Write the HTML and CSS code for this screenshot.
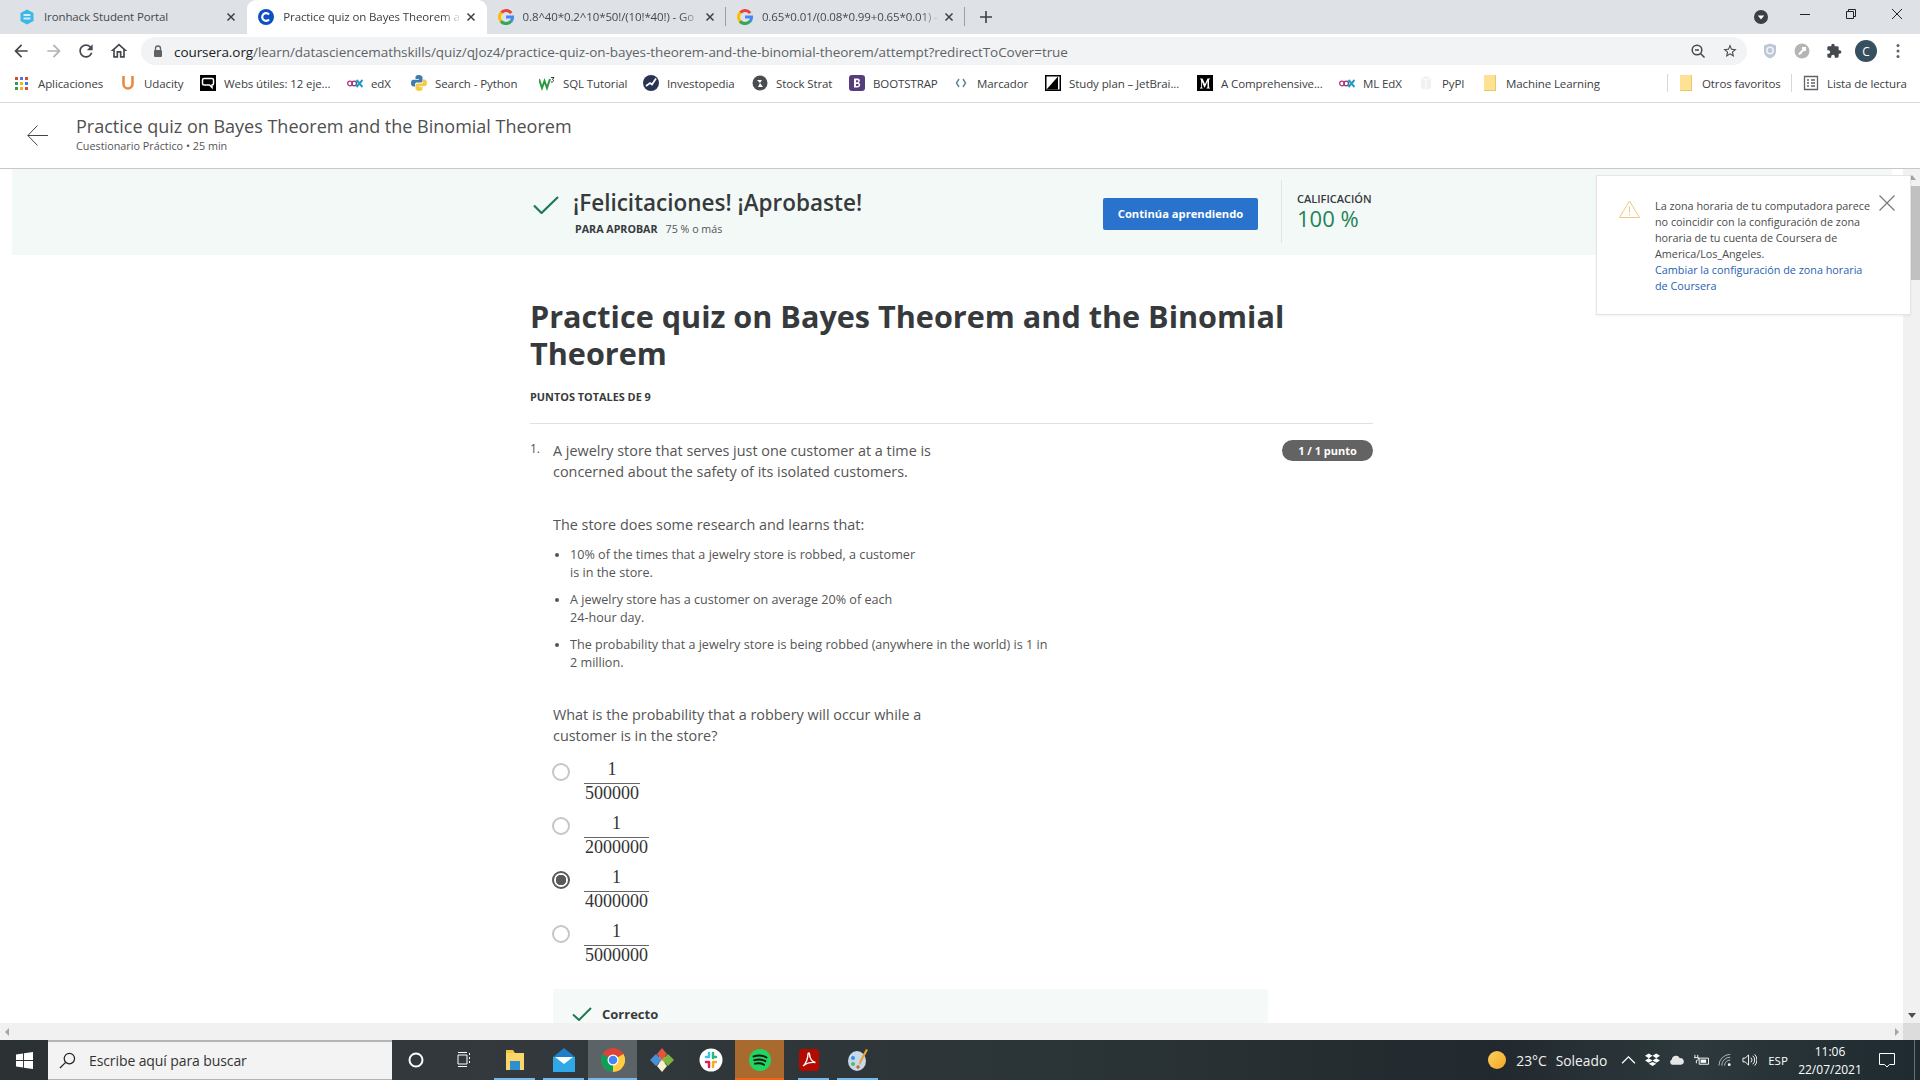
FILE: index.html
```html
<!DOCTYPE html>
<html lang="es">
<head>
<meta charset="utf-8">
<title>Practice quiz on Bayes Theorem and the Binomial Theorem</title>
<link rel="stylesheet" href="styles.css">
</head>
<body>
<div class="window">

  <div class="tabstrip">
    <div class="tab">
      <svg class="favicon" viewBox="0 0 16 16"><path d="M8 .5 14.5 4v8L8 15.5 1.5 12V4z" fill="#3fb6e8"/><rect x="4.5" y="5" width="7" height="2" fill="#cdeefb"/><rect x="4.5" y="8.5" width="7" height="2" fill="#cdeefb"/></svg>
      <span class="tab-title tab-plain">Ironhack Student Portal</span>
      <svg class="tab-close" viewBox="0 0 10 10"><path d="M1.5 1.5l7 7M8.5 1.5l-7 7"/></svg>
    </div>
    <div class="tab tab-active">
      <svg class="favicon" viewBox="0 0 16 16"><circle cx="8" cy="8" r="8" fill="#0f4fc4"/><path d="M11 5.4A3.9 3.9 0 1 0 11 10.6" fill="none" stroke="#fff" stroke-width="2.2"/></svg>
      <span class="tab-title">Practice quiz on Bayes Theorem a</span>
      <svg class="tab-close" viewBox="0 0 10 10"><path d="M1.5 1.5l7 7M8.5 1.5l-7 7"/></svg>
    </div>
    <div class="tab">
      <svg class="favicon" viewBox="0 0 16 16"><use href="#google"/></svg>
      <span class="tab-title">0.8^40*0.2^10*50!/(10!*40!) - Go</span>
      <svg class="tab-close" viewBox="0 0 10 10"><path d="M1.5 1.5l7 7M8.5 1.5l-7 7"/></svg>
    </div>
    <i class="tab-sep"></i>
    <div class="tab">
      <svg class="favicon" viewBox="0 0 16 16"><use href="#google"/></svg>
      <span class="tab-title">0.65*0.01/(0.08*0.99+0.65*0.01) -</span>
      <svg class="tab-close" viewBox="0 0 10 10"><path d="M1.5 1.5l7 7M8.5 1.5l-7 7"/></svg>
    </div>
    <i class="tab-sep"></i>
    <svg class="new-tab" viewBox="0 0 12 12"><path d="M6 0v12M0 6h12"/></svg>
    <div class="win-controls">
      <span class="profile-down"><svg viewBox="0 0 14 14"><circle cx="7" cy="7" r="7" fill="#3c4043"/><path d="M3.8 5.5h6.4L7 9.6z" fill="#fff"/></svg></span>
      <span class="win-btn"><svg viewBox="0 0 12 12"><path d="M1 6.5h10"/></svg></span>
      <span class="win-btn"><svg viewBox="0 0 12 12"><path d="M1.5 3.5h7v7h-7zM3.5 3.5v-2h7v7h-2"/></svg></span>
      <span class="win-btn"><svg viewBox="0 0 12 12"><path d="M1 1l10 10M11 1L1 11"/></svg></span>
    </div>
  </div>

  <div class="toolbar">
    <span class="nav-btn"><svg viewBox="0 0 24 24"><path d="M20 11H7.830l5.590-5.590L12 4l-8 8 8 8 1.410-1.410L7.830 13H20v-2z" fill="#45494d"/></svg></span>
    <span class="nav-btn"><svg viewBox="0 0 24 24"><path d="M4 11h12.170l-5.590-5.590L12 4l8 8-8 8-1.410-1.410L16.170 13H4v-2z" fill="#b0b3b7"/></svg></span>
    <span class="nav-btn"><svg viewBox="0 0 24 24"><path d="M17.650 6.350C16.200 4.900 14.210 4 12 4c-4.420 0-7.990 3.580-7.990 8s3.570 8 7.990 8c3.730 0 6.840-2.550 7.730-6h-2.080c-.82 2.330-3.040 4-5.650 4-3.310 0-6-2.690-6-6s2.690-6 6-6c1.660 0 3.140.69 4.220 1.780L13 11h7V4l-2.350 2.350z" fill="#45494d"/></svg></span>
    <span class="nav-btn"><svg viewBox="0 0 24 24"><path d="M12 5.690l5 4.500V18h-2v-6H9v6H7v-7.810l5-4.500M12 3L2 12h3v8h6v-6h2v6h6v-8h3L12 3z" fill="#45494d"/></svg></span>
    <div class="omnibox">
      <svg class="lock" viewBox="0 0 10 12"><path d="M2.500 5V3.500a2.500 2.500 0 0 1 5 0V5" fill="none" stroke="#5f6368" stroke-width="1.300"/><rect x="1" y="5" width="8" height="7" rx="1" fill="#5f6368"/></svg>
      <span class="url">coursera.org<span class="url-path">/learn/datasciencemathskills/quiz/qJoz4/practice-quiz-on-bayes-theorem-and-the-binomial-theorem/attempt?redirectToCover=true</span></span>
      <svg class="omni-ic" viewBox="0 0 16 16"><circle cx="7" cy="7" r="4.800" class="ic-dark"/><path d="M10.500 10.500l4 4M5 7h4" class="ic-dark"/></svg>
      <svg class="omni-ic" viewBox="0 0 24 24"><path d="M22 9.240l-7.190-.62L12 2 9.190 8.630 2 9.240l5.460 4.730L5.820 21 12 17.270 18.180 21l-1.630-7.030L22 9.240zM12 15.400l-3.760 2.270 1-4.280-3.320-2.880 4.380-.38L12 6.100l1.710 4.040 4.380.38-3.320 2.880 1 4.280L12 15.400z" fill="#45494d"/></svg>
    </div>
    <div class="ext-row">
      <span class="ext"><svg viewBox="0 0 16 16"><path d="M8 .5l6 2v6c0 3.500-3 6-6 7-3-1-6-3.500-6-7v-6z" fill="#bcc6d4"/><circle cx="8" cy="7.500" r="3.200" fill="none" stroke="#f1f3f6" stroke-width="1.500"/></svg></span>
      <span class="ext"><svg viewBox="0 0 16 16"><circle cx="8" cy="8" r="7.500" fill="#b5b5b5"/><path d="M5 11.500 11 5M8 5h3v3" fill="none" stroke="#fff" stroke-width="2"/></svg></span>
      <span class="ext"><svg viewBox="0 0 24 24"><path d="M20.500 11H19V7c0-1.100-.9-2-2-2h-4V3.500C13 2.120 11.880 1 10.500 1S8 2.120 8 3.500V5H4c-1.100 0-1.990.9-1.990 2v3.800H3.500c1.490 0 2.700 1.210 2.700 2.700s-1.210 2.700-2.700 2.700H2V20c0 1.100.9 2 2 2h3.800v-1.500c0-1.490 1.210-2.700 2.700-2.700 1.490 0 2.700 1.210 2.700 2.700V22H17c1.100 0 2-.9 2-2v-4h1.500c1.380 0 2.500-1.120 2.500-2.500S21.880 11 20.500 11z" fill="#45494d"/></svg></span>
      <span class="avatar">C</span>
      <span class="ext"><svg viewBox="0 0 4 16"><circle cx="2" cy="2.500" r="1.500" fill="#5f6368"/><circle cx="2" cy="8" r="1.500" fill="#5f6368"/><circle cx="2" cy="13.500" r="1.500" fill="#5f6368"/></svg></span>
    </div>
  </div>

  <div class="bookmarks">
    <a class="bm"><svg class="bm-apps" viewBox="0 0 13 13"><rect width="3" height="3" fill="#d84b37"/><rect x="5" width="3" height="3" fill="#3c7fe0"/><rect x="10" width="3" height="3" fill="#d84b37"/><rect y="5" width="3" height="3" fill="#3a9a4d"/><rect x="5" y="5" width="3" height="3" fill="#f1b51c"/><rect x="10" y="5" width="3" height="3" fill="#3c7fe0"/><rect y="10" width="3" height="3" fill="#3a9a4d"/><rect x="5" y="10" width="3" height="3" fill="#f1b51c"/><rect x="10" y="10" width="3" height="3" fill="#d84b37"/></svg><span>Aplicaciones</span></a>
    <a class="bm"><svg viewBox="0 0 16 16"><path d="M3.500 1v8a4.500 4.500 0 0 0 9 0V1" fill="none" stroke="#e58a45" stroke-width="2.600"/></svg><span>Udacity</span></a>
    <a class="bm"><svg viewBox="0 0 16 16"><rect width="16" height="16" fill="#000"/><path d="M4 3.500h8a1.500 1.500 0 0 1 1.500 1.500v3.500A1.500 1.500 0 0 1 12 10v2.500L9.500 10H4a1.500 1.500 0 0 1-1.500-1.500V5A1.500 1.500 0 0 1 4 3.500z" fill="none" stroke="#fff" stroke-width="1.500"/></svg><span>Webs útiles: 12 eje...</span></a>
    <a class="bm"><svg viewBox="0 0 16 16"><circle cx="3" cy="8.500" r="2.300" fill="none" stroke="#b5396f" stroke-width="1.300"/><circle cx="7.200" cy="8.500" r="2.300" fill="none" stroke="#8a3d7a" stroke-width="1.300"/><path d="M9.500 5l6 7M15.500 5l-6 7" stroke="#1f9bc4" stroke-width="2"/></svg><span>edX</span></a>
    <a class="bm"><svg viewBox="0 0 16 16"><path d="M8 0C5 0 4.500 1.200 4.500 2.500V4H8v.8H2.500C1 4.800 0 6 0 8s1 3.500 2.500 3.500H4V9.500C4 8 5 7.500 6 7.500h4c1 0 1.500-.8 1.500-1.500V2.500C11.500 1 10 0 8 0z" fill="#3f7cb0"/><path d="M8 16c3 0 3.500-1.200 3.500-2.500V12H8v-.8h5.500C15 11.200 16 10 16 8s-1-3.500-2.500-3.500H12v2C12 8 11 8.500 10 8.500H6c-1 0-1.500.8-1.500 1.500v3.500C4.500 15 6 16 8 16z" fill="#f4cc45"/></svg><span>Search - Python</span></a>
    <a class="bm"><svg viewBox="0 0 16 16"><path d="M0 4l3 9 2.500-7 2.500 7 3-9" fill="none" stroke="#2a9a3e" stroke-width="2"/><path d="M12 2.500h3l-1.500 2c1.500 0 1.500 3-1.500 2.500" fill="none" stroke="#333" stroke-width="1"/></svg><span>SQL Tutorial</span></a>
    <a class="bm"><svg viewBox="0 0 16 16"><circle cx="8" cy="8" r="8" fill="#2a3353"/><path d="M3 11l4-3 2 1.500 4-6" fill="none" stroke="#fff" stroke-width="1.700"/></svg><span>Investopedia</span></a>
    <a class="bm"><svg viewBox="0 0 16 16"><circle cx="8" cy="8" r="7.500" fill="#4a4d50"/><path d="M5 5h5l-2 3 3 4H6l2-4z" fill="#fff"/></svg><span>Stock Strat</span></a>
    <a class="bm"><svg viewBox="0 0 16 16"><rect width="16" height="16" rx="3" fill="#563d7c"/><path d="M5 3.500h3.500c3 0 3 3.500 1 4.300 2.700.7 2.200 4.700-1 4.700H5zM7 5.200v2h1.300c1.500 0 1.500-2 0-2zM7 8.900v2h1.500c1.700 0 1.700-2 0-2z" fill="#fff" fill-rule="evenodd"/></svg><span>BOOTSTRAP</span></a>
    <a class="bm"><svg viewBox="0 0 16 16"><path d="M6 4 3.500 8 6 12M10 4l2.500 4L10 12" fill="none" stroke="#5f8a94" stroke-width="1.500"/></svg><span>Marcador</span></a>
    <a class="bm"><svg viewBox="0 0 16 16"><rect width="16" height="16" fill="#000"/><rect x="1.500" y="1.500" width="13" height="13" fill="#fff"/><path d="M1.500 14.500 13 1.500v13z" fill="#000"/></svg><span>Study plan – JetBrai...</span></a>
    <a class="bm"><svg viewBox="0 0 16 16"><rect width="16" height="16" fill="#000"/><path d="M3 3.500h2.500L8 9l2.500-5.500H13v.5l-1 .8v7.400l1 .8v.5H9.500V13l1-.8V6.500L7.800 12.500h-.5L4.800 6.500v5.700l1 .8v.5H3V13l1-.8V4.800L3 4z" fill="#fff"/></svg><span>A Comprehensive...</span></a>
    <a class="bm"><svg viewBox="0 0 16 16"><circle cx="3" cy="8.500" r="2.300" fill="none" stroke="#b5396f" stroke-width="1.300"/><circle cx="7.200" cy="8.500" r="2.300" fill="none" stroke="#8a3d7a" stroke-width="1.300"/><path d="M9.500 5l6 7M15.500 5l-6 7" stroke="#1f9bc4" stroke-width="2"/></svg><span>ML EdX</span></a>
    <a class="bm"><svg viewBox="0 0 16 16"><path d="M3 3l5-2 5 2v10l-5 2-5-2z" fill="#f1f1ee"/><path d="M8 5v10M3 3l5 2 5-2" fill="none" stroke="#fff"/></svg><span>PyPI</span></a>
    <a class="bm"><svg class="bm-folder" viewBox="0 0 12 16"><path d="M0 0h12v16H0z" fill="#fde293"/><path d="M0 15h12v1H0zM11 0h1v16h-1z" fill="#e8c869"/></svg><span>Machine Learning</span></a>
    <i class="bm-sep"></i>
    <a class="bm"><svg class="bm-folder" viewBox="0 0 12 16"><path d="M0 0h12v16H0z" fill="#fde293"/><path d="M0 15h12v1H0zM11 0h1v16h-1z" fill="#e8c869"/></svg><span>Otros favoritos</span></a>
    <i class="bm-sep"></i>
    <a class="bm"><svg viewBox="0 0 16 16"><path d="M1.500 1.500h13v13h-13zM4 5h2M8 5h4M4 8h2M8 8h4M4 11h2M8 11h4" fill="none" stroke="#5f6368" stroke-width="1.300"/></svg><span>Lista de lectura</span></a>
  </div>

  <header class="course-header">
    <svg class="back-arrow" viewBox="0 0 21 21"><path d="M21 10.500H1M10.500 .5 .8 10.500l9.700 10" fill="none" stroke="#444" stroke-width="1"/></svg>
    <div class="course-heading">
      <div class="course-title">Practice quiz on Bayes Theorem and the Binomial Theorem</div>
      <div class="course-sub">Cuestionario Práctico • 25 min</div>
    </div>
  </header>

  <div class="scroll-row">
    <main class="page">
      <section class="banner">
        <div class="banner-inner">
          <svg class="banner-check" viewBox="0 0 26 18"><path d="M1 9.500 8.500 17 25 1" fill="none" stroke="#1f7a54" stroke-width="2.200"/></svg>
          <div class="banner-text">
            <div class="banner-title">¡Felicitaciones! ¡Aprobaste!</div>
            <div class="banner-sub"><b>PARA APROBAR</b><span>75 % o más</span></div>
          </div>
          <button class="continue">Continúa aprendiendo</button>
          <i class="banner-sep"></i>
          <div class="grade">
            <div class="grade-label">CALIFICACIÓN</div>
            <div class="grade-value">100 %</div>
          </div>
        </div>
      </section>

      <article class="quiz">
        <h1>Practice quiz on Bayes Theorem and the Binomial Theorem</h1>
        <div class="points-total">PUNTOS TOTALES DE 9</div>
        <div class="question">
          <div class="q-num">1.</div>
          <div class="q-body">
            <p>A jewelry store that serves just one customer at a time is<br>concerned about the safety of its isolated customers.</p>
            <p class="q-gap">The store does some research and learns that:</p>
            <ul>
              <li>10% of the times that a jewelry store is robbed, a customer<br>is in the store.</li>
              <li>A jewelry store has a customer on average 20% of each<br>24-hour day.</li>
              <li>The probability that a jewelry store is being robbed (anywhere in the world) is 1 in<br>2 million.</li>
            </ul>
            <p class="q-gap">What is the probability that a robbery will occur while a<br>customer is in the store?</p>
            <div class="options">
              <div class="option"><i class="radio"></i><div class="frac"><span class="num">1</span><span class="den">500000</span></div></div>
              <div class="option"><i class="radio"></i><div class="frac"><span class="num">1</span><span class="den">2000000</span></div></div>
              <div class="option"><i class="radio radio-on"></i><div class="frac"><span class="num">1</span><span class="den">4000000</span></div></div>
              <div class="option"><i class="radio"></i><div class="frac"><span class="num">1</span><span class="den">5000000</span></div></div>
            </div>
            <div class="feedback">
              <svg viewBox="0 0 20 14"><path d="M1 7.500 7 13 19 1" fill="none" stroke="#1f7a54" stroke-width="2"/></svg>
              <span>Correcto</span>
            </div>
          </div>
          <div class="pill">1 / 1 punto</div>
        </div>
      </article>
    </main>

    <div class="vscroll">
      <i class="arrow-up"></i>
      <i class="v-thumb"></i>
      <i class="arrow-down"></i>
    </div>

    <aside class="notice">
      <svg class="notice-warn" viewBox="0 0 21 18"><path d="M10.500 1 20.500 17.500H.5z" fill="none" stroke="#f3c57f" stroke-width="1"/><path d="M10.500 6.500v6M10.500 14v1.500" stroke="#f3c57f" stroke-width="1"/></svg>
      <div class="notice-text">La zona horaria de tu computadora parece no coincidir con la configuración de zona horaria de tu cuenta de Coursera de America/Los_Angeles.<br><a>Cambiar la configuración de zona horaria de Coursera</a></div>
      <svg class="notice-close" viewBox="0 0 16 16"><path d="M.5.5l15 15M15.500.5l-15 15" stroke="#777" stroke-width="1.200"/></svg>
    </aside>
  </div>

  <div class="hscroll">
    <i class="arrow-left"></i>
    <i class="arrow-right"></i>
    <i class="corner"></i>
  </div>

  <footer class="taskbar">
    <div class="start"><svg viewBox="0 0 18 18"><path d="M0 2.600 7.500 1.500v7H0zM8.500 1.400 18 0v8.500H8.500zM0 9.500h7.500v7L0 15.400zM8.500 9.500H18V18L8.500 16.600z" fill="#fff"/></svg></div>
    <div class="search"><svg viewBox="0 0 18 18"><circle cx="11" cy="7" r="5.500" fill="none" stroke="#222" stroke-width="1.300"/><path d="M7 11 1 17" stroke="#222" stroke-width="1.300"/></svg><span>Escribe aquí para buscar</span></div>
    <div class="tb-cell tb-wide"><svg viewBox="0 0 16 16"><circle cx="8" cy="8" r="6.500" fill="none" stroke="#fff" stroke-width="2"/></svg></div>
    <div class="tb-cell tb-wide tb-gap"><svg viewBox="0 0 16 16"><path d="M1 3h9v9H1zM1 .5h9M1 14.500h9M12.500 1v2M12.500 5v2M12.500 9v2" fill="none" stroke="#fff"/></svg></div>
    <div class="tb-cell run"><svg class="tb-icon" viewBox="0 0 24 24"><path d="M3 2h7l2 3h9v8H3z" fill="#f6c445"/><path d="M3 5h18v17H3z" fill="#fbd66b"/><path d="M7 13h10v9H7z" fill="#2f8fcf"/></svg></div>
    <div class="tb-cell run"><svg class="tb-icon" viewBox="0 0 24 24"><path d="M12 0 23 9v15H1V9z" fill="#1d7fc7"/><path d="M1 9h22v15H1z" fill="#30a7e6"/><path d="M3 9h18l-9 7z" fill="#fff"/></svg></div>
    <div class="tb-cell run tb-active"><svg class="tb-icon" viewBox="0 0 24 24"><circle cx="12" cy="12" r="12" fill="#db4437"/><path d="M12 12 1.600 6A12 12 0 0 0 12 24z" fill="#0f9d58"/><path d="M12 12v12A12 12 0 0 0 22.400 6z" fill="#ffcd40"/><circle cx="12" cy="12" r="5.500" fill="#fff"/><circle cx="12" cy="12" r="4.300" fill="#4285f4"/></svg></div>
    <div class="tb-cell"><svg class="tb-icon" viewBox="0 0 24 24"><path d="M12 6l6 6-6 6-6-6z" fill="#f0c04a"/><path d="M6 6l6 6-6 6-6-6z" fill="#4a90d9"/><path d="M18 6l6 6-6 6-6-6z" fill="#7cb342"/><path d="M12 0l5 6-5 6-5-6z" fill="#e0553f"/><path d="M12 12l5 6-5 6-5-6z" fill="#f7f1d0"/></svg></div>
    <div class="tb-cell"><svg class="tb-icon" viewBox="0 0 24 24"><circle cx="12" cy="12" r="11.500" fill="#fff"/><path d="M10 5v4M7 9h3" stroke="#36c5f0" stroke-width="2.500" stroke-linecap="round"/><path d="M14 5v5M14 9h3" stroke="#2eb67d" stroke-width="2.500" stroke-linecap="round"/><path d="M10 14v5M7 14h3" stroke="#e01e5a" stroke-width="2.500" stroke-linecap="round"/><path d="M14 14h3M14 14v5" stroke="#ecb22e" stroke-width="2.500" stroke-linecap="round"/></svg></div>
    <div class="tb-cell run tb-orange"><svg class="tb-icon" viewBox="0 0 24 24"><circle cx="12" cy="12" r="11" fill="#1ed760"/><path d="M5.500 8.500c4-1.300 9.500-1 13 1M6.300 12.200c3.500-1 8-.7 11 1M7 15.700c3-.8 6.500-.5 9 1" fill="none" stroke="#191414" stroke-width="1.900" stroke-linecap="round"/></svg></div>
    <div class="tb-cell run run-short"><svg class="tb-icon" viewBox="0 0 24 24"><rect x="2" y="1" width="20" height="22" rx="3" fill="#b30b00"/><path d="M6 18c3-2 5-8 5-12 0-1.500 1.500-1.500 1.500 0 0 5 3 8 6 8.500-4-.5-9 .5-12.500 3.500z" fill="none" stroke="#fff" stroke-width="1.400"/></svg></div>
    <div class="tb-cell run"><svg class="tb-icon" viewBox="0 0 24 24"><ellipse cx="11" cy="13" rx="9" ry="10" fill="#c6d9ea"/><circle cx="7" cy="10" r="2" fill="#3b8edb"/><circle cx="7" cy="16" r="2" fill="#5cb85c"/><circle cx="12" cy="19" r="1.700" fill="#e0553f"/><path d="M20 1l2 1-6 11-2 4-1-1 1-4z" fill="#e8a13a"/></svg></div>

    <div class="tray">
      <div class="weather"><i class="sun"></i><span>23°C</span><span>Soleado</span></div>
      <span class="tray-ic"><svg viewBox="0 0 14 8"><path d="M1 7l6-6 6 6" fill="none" stroke="#fff" stroke-width="1.200"/></svg></span>
      <span class="tray-ic"><svg viewBox="0 0 16 14"><path d="M4 0l4 2.500L4 5 0 2.500zM12 0l4 2.500L12 5 8 2.500zM4 5l4 2.500L4 10 0 7.500zM12 5l4 2.500L12 10 8 7.500zM4 11l4-2 4 2-4 2.500z" fill="#fff"/></svg></span>
      <span class="tray-ic"><svg viewBox="0 0 16 10"><path d="M3 10a3 3 0 0 1 0-5.500A4.500 4.500 0 0 1 11.500 3 3.500 3.500 0 0 1 13 10z" fill="#e6e6e6"/></svg></span>
      <span class="tray-ic"><svg viewBox="0 0 16 12"><path d="M5.500 4h10v6.500h-10zM1 .5v3M4 .5v3M0 3.500h5c0 3-2 3-2.500 3v3" fill="none" stroke="#fff"/><path d="M7 5.500h6v3.500H7z" fill="#fff"/></svg></span>
      <span class="tray-ic"><svg viewBox="0 0 16 14"><path d="M1 13A12 12 0 0 1 13 1M4 13a9 9 0 0 1 9-9M7 13a6 6 0 0 1 6-6" fill="none" stroke="#bbb"/><circle cx="12" cy="12" r="1.500" fill="#fff"/></svg></span>
      <span class="tray-ic"><svg viewBox="0 0 16 14"><path d="M1 5h2.500L7 1.500v11L3.500 9H1zM9.500 4.500a3.500 3.500 0 0 1 0 5M11.500 2.500a6 6 0 0 1 0 9M13.500 1a8.500 8.500 0 0 1 0 12" fill="none" stroke="#fff"/></svg></span>
      <span class="lang">ESP</span>
      <div class="clock"><span>11:06</span><span>22/07/2021</span></div>
      <span class="notif"><svg viewBox="0 0 16 16"><path d="M.5 1.500h15v11h-5L8 15l-2.500-2.500h-5z" fill="none" stroke="#fff"/></svg></span>
      <i class="desk-edge"></i>
    </div>
  </footer>
</div>

<svg class="defs" width="0" height="0"><defs>
  <g id="google" fill="none" stroke-width="3">
    <path d="M13.200 4.200A6.500 6.500 0 0 0 3.200 3.700" stroke="#ea4335"/>
    <path d="M3.500 3.300A6.500 6.500 0 0 0 3.300 12.500" stroke="#fbbc05"/>
    <path d="M3 12.200A6.500 6.500 0 0 0 13 12.300" stroke="#34a853"/>
    <path d="M13 12.500A6.500 6.500 0 0 0 14.500 8H8" stroke="#4285f4"/>
  </g>
</defs></svg>
</body>
</html>
```
FILE: styles.css
```css
* { box-sizing: border-box; }
html, body { margin: 0; padding: 0; height: 100%; overflow: hidden; background: #fff; }
body { font-family: "Open Sans", "Noto Sans", sans-serif; color: #373a3c; }
.defs { position: absolute; }
.window { display: flex; flex-direction: column; width: 1920px; height: 1080px; overflow: hidden; }

/* tab strip */
.tabstrip { flex: 0 0 34px; display: flex; align-items: stretch; background: #dee1e6; padding-left: 8px; }
.tab { width: 239.3px; display: flex; align-items: center; padding: 0 9px 1px 11px; font-size: 11.5px; color: #45494d; letter-spacing: -.12px; }
.tab-active { background: #fff; border-radius: 9px 9px 0 0; color: #3c4043; }
.tab-sep { flex: 0 0 1px; margin: 7px 0 8px -1px; background: #9aa0a6; }
.favicon { width: 16px; height: 16px; flex: none; margin-right: 9px; }
.tab-title { flex: 1; white-space: nowrap; -webkit-mask-image: linear-gradient(90deg, #000 88%, transparent 99%); mask-image: linear-gradient(90deg, #000 88%, transparent 99%); }
.tab-plain { -webkit-mask-image: none; mask-image: none; }
.tab-close { width: 14px; height: 14px; flex: none; padding: 2px; fill: none; stroke: #3c4043; stroke-width: 1.500; }
.new-tab { width: 12px; height: 12px; margin: 11px 0 0 15px; fill: none; stroke: #3c4043; stroke-width: 1.600; }
.win-controls { margin-left: auto; display: flex; align-items: flex-start; }
.profile-down { width: 14px; height: 14px; margin: 10px 14px 0 0; display: block; }
.profile-down svg { display: block; width: 14px; height: 14px; }
.win-btn { width: 46px; height: 28px; display: flex; align-items: center; justify-content: center; }
.win-btn svg { width: 12px; height: 12px; fill: none; stroke: #222; stroke-width: 1; }

/* toolbar */
.toolbar { flex: 0 0 34px; display: flex; align-items: center; background: #fff; padding-left: 5px; }
.nav-btn { width: 32.5px; height: 28px; display: flex; align-items: center; justify-content: center; }
.nav-btn svg { width: 20px; height: 20px; }
.ic-dark { fill: none; stroke: #45494d; stroke-width: 1.500; }
.omnibox { width: 1606px; height: 28px; margin-left: 6px; padding: 0 9px 0 12px; border-radius: 14px; background: #f1f3f4; display: flex; align-items: center; }
.lock { width: 10px; height: 12px; flex: none; margin-right: 11px; }
.url { flex: 1; padding-top: 2px; font-size: 13.5px; color: #202124; white-space: nowrap; overflow: hidden; letter-spacing: -.07px; }
.url-path { color: #5f6368; }
.omni-ic { width: 16px; height: 16px; flex: none; margin-left: 16px; }
.ext-row { margin-left: 7px; display: flex; align-items: center; }
.ext { width: 32px; height: 24px; display: flex; align-items: center; justify-content: center; }
.ext svg { height: 16px; width: 16px; }
.avatar { width: 22px; height: 22px; margin: 0 5px; border-radius: 50%; background: #37505f; color: #fff; font-size: 12px; display: flex; align-items: center; justify-content: center; }

/* bookmarks */
.bookmarks { flex: 0 0 35px; border-bottom: 1px solid #d9d9d9; padding: 0 0 4px 15px; display: grid; align-items: center; grid-template-columns: 105px 80px 147px 64px 128px 104px 109px 97px 104px 92px 152px 142px 79px 64px 185px 11px 113px 12px 1fr; background: #fff; font-size: 11.5px; color: #3c4043; letter-spacing: -.1px; }
.bm { display: flex; align-items: center; gap: 8px; white-space: nowrap; }
.bm svg { width: 16px; height: 16px; flex: none; }
.bm .bm-apps { width: 13px; height: 13px; margin-right: 2px; }
.bm .bm-folder { width: 12px; margin: 0 2px; }
.bm-sep { width: 1px; height: 18px; background: #d8d8d8; }

/* course header */
.course-header { flex: 0 0 66px; border-bottom: 1px solid #c8c8c8; padding-left: 27px; display: flex; align-items: center; background: #fff; }
.back-arrow { width: 21px; height: 21px; margin-right: 28px; }
.course-heading { padding-bottom: 4px; }
.course-title { font-size: 18px; line-height: 24px; color: #4f4f4f; }
.course-sub { font-size: 10.8px; line-height: 14px; margin-top: 1px; color: #555; }

/* scroll area */
.scroll-row { flex: 1; min-height: 0; position: relative; display: flex; overflow: hidden; }
.page { flex: 1; min-width: 0; background: #fff; overflow: hidden; }
.vscroll { flex: 0 0 17px; background: #f1f1f1; display: flex; flex-direction: column; align-items: stretch; }
.arrow-up { height: 0; width: 0; margin: 6px auto 0; border: 4px solid transparent; border-top: 0; border-bottom: 5px solid #a3a3a3; }
.v-thumb { margin-top: 6px; height: 94px; background: #c1c1c1; }
.arrow-down { height: 0; width: 0; margin: auto auto 5px; border: 4px solid transparent; border-bottom: 0; border-top: 5px solid #505050; }
.hscroll { flex: 0 0 17px; background: #f1f1f1; display: flex; align-items: center; padding-left: 5px; }
.arrow-left { width: 0; height: 0; border: 4px solid transparent; border-left: 0; border-right: 4px solid #a3a3a3; }
.arrow-right { margin-left: auto; margin-right: 4px; width: 0; height: 0; border: 4px solid transparent; border-right: 0; border-left: 4px solid #a3a3a3; }
.corner { width: 17px; height: 17px; background: #dcdcdc; }

/* banner */
.banner { margin: 0 11px 0 12px; height: 86px; background: #f2f9f7; }
.banner-inner { width: 843px; margin-left: 518px; height: 86px; display: flex; align-items: flex-start; }
.banner-check { width: 26px; height: 18px; margin: 27px 14px 0 3px; flex: none; }
.banner-text { margin-top: 18px; }
.banner-title { font-size: 22.5px; line-height: 32px; font-weight: 600; color: #373a3c; white-space: nowrap; }
.banner-sub { margin: 2px 0 0 2px; font-size: 11px; line-height: 16px; color: #555; display: flex; gap: 8px; }
.banner-sub b { font-weight: 700; color: #373a3c; font-size: 10.7px; }
.banner-sub span { font-size: 10.7px; }
.continue { margin: 29px 0 0 auto; width: 155px; height: 32px; flex: none; border: 0; border-radius: 2px; background: #2a73cc; color: #fff; font: 700 11.2px "Open Sans", sans-serif; padding: 0 0 2px; }
.banner-sep { flex: none; width: 1px; height: 63px; margin: 11px 15px 0 23px; background: #e1e6e4; }
.grade { width: 76px; margin-top: 22px; flex: none; }
.grade-label { font-size: 11px; line-height: 16px; font-weight: 600; color: #373a3c; white-space: nowrap; }
.grade-value { font-size: 22px; line-height: 28px; margin-top: -3px; color: #1f8354; white-space: nowrap; }

/* quiz */
.quiz { width: 843px; margin-left: 530px; padding-top: 43px; }
h1 { margin: 0; font-size: 30.6px; line-height: 37px; font-weight: 700; color: #373a3c; }
.points-total { margin-top: 17px; font-size: 10.9px; line-height: 16px; font-weight: 700; color: #373a3c; padding-bottom: 18px; border-bottom: 1px solid #e1e1e1; }
.question { display: flex; align-items: flex-start; padding-top: 16px; }
.q-num { flex: 0 0 23px; font-size: 12px; line-height: 18px; color: #555; }
.q-body { flex: 1; min-width: 0; color: #555; }
.q-body p { margin: 0; font-size: 14.4px; line-height: 21px; }
.q-body .q-gap { margin-top: 32px; }
ul { margin: 10.500px 0 0; padding: 0 0 0 17px; font-size: 12.6px; line-height: 18px; color: #555; }
li { margin-bottom: 9px; }
li:last-child { margin-bottom: 0; }
.options { margin-top: 14px; display: flex; flex-direction: column; gap: 12px; }
.option { display: flex; align-items: flex-start; }
.radio { flex: none; width: 18px; height: 18px; margin: 3px 14px 0 -1px; border: 2px solid #c6c6c6; border-radius: 50%; display: block; }
.radio-on { border-color: #5a5a5a; background: radial-gradient(circle, #5a5a5a 0 5px, #fff 5.500px); }
.frac { display: inline-flex; flex-direction: column; align-items: stretch; text-align: center; font-family: "Liberation Serif", serif; font-size: 18px; line-height: 18px; color: #333; }
.num { padding-bottom: 5px; border-bottom: 1px solid #666; }
.den { padding: 0 1px; }
.feedback { margin-top: 25px; width: 715px; height: 120px; padding: 18px 0 0 19px; background: #f5f9f8; display: flex; align-items: flex-start; gap: 10px; }
.feedback svg { width: 20px; height: 14px; flex: none; }
.feedback span { font-size: 13px; line-height: 14px; font-weight: 700; color: #373a3c; }
.pill { flex: none; width: 91px; height: 21px; border-radius: 11px; background: #636363; color: #fff; font-size: 11px; line-height: 21px; font-weight: 700; text-align: center; }

/* timezone notice */
.notice { position: absolute; top: 6px; right: 9px; width: 315px; height: 140px; padding: 23px 0 0 22px; background: #fff; border: 1px solid #e5e5e5; box-shadow: 0 1px 2px rgba(0,0,0,.06); display: flex; align-items: flex-start; }
.notice-warn { width: 21px; height: 18px; flex: none; margin: 1px 15px 0 0; }
.notice-text { width: 220px; font-size: 10.8px; line-height: 15.900px; color: #4a4a4a; margin-top: -1px; }
.notice-text a { color: #1f5fb4; }
.notice-close { width: 16px; height: 16px; flex: none; margin: -4px 0 0 4px; }

/* taskbar */
.taskbar { flex: 0 0 40px; display: flex; align-items: stretch; background: linear-gradient(90deg, #2b3133 0, #33393c 25%, #2b3437 55%, #22292e 78%, #2d393c 88%, #1f2a30 100%); color: #fff; }
.start { width: 48px; display: flex; align-items: center; justify-content: center; }
.start svg { width: 17px; height: 17px; }
.search { width: 344px; background: #f3f3f3; border-top: 2px solid #b4b4b4; border-bottom: 1px solid #b4b4b4; display: flex; align-items: center; padding-left: 11px; color: #333; font-size: 14px; letter-spacing: -.1px; }
.search svg { width: 17px; height: 17px; margin-right: 13px; }
.tb-cell { width: 49px; position: relative; display: flex; align-items: center; justify-content: center; }
.tb-cell svg { width: 24px; height: 24px; }
.tb-wide { width: 48px; }
.tb-wide svg { width: 16px; height: 16px; }
.tb-gap { margin-right: 1px; margin-left: 1px; }
.run::after { content: ""; position: absolute; left: 4px; right: 4px; bottom: 0; height: 2px; background: #76b9ed; }
.run-short::after { left: 14px; }
.tb-active { background: #5b6367; }
.tb-active::after { left: 0; right: 0; }
.tb-orange { background: #a96a30; }
.tb-orange::after { left: 0; right: 0; background: #f7630c; }
.tb-cell .tb-icon { width: 24px; height: 24px; }
.tray { margin-left: auto; display: flex; align-items: center; }
.weather { display: flex; align-items: center; font-size: 13.800px; margin-right: 9px; color: #f2f2f2; }
.sun { width: 18px; height: 18px; border-radius: 50%; margin-right: 10px; background: linear-gradient(135deg, #fbd25e, #f6a623); }
.weather span + span { margin-left: 9px; }
.tray-ic { width: 24.300px; display: flex; justify-content: center; }
.tray-ic svg { width: 15px; height: 14px; }
.lang { width: 32px; text-align: center; font-size: 11.500px; }
.clock { width: 72px; padding-top: 1px; display: flex; flex-direction: column; align-items: center; font-size: 12px; line-height: 18px; }
.notif { width: 42px; display: flex; justify-content: center; }
.notif svg { width: 16px; height: 16px; }
.desk-edge { width: 1px; height: 40px; margin: 0 5px 0 6px; background: #6a6f72; }
```
